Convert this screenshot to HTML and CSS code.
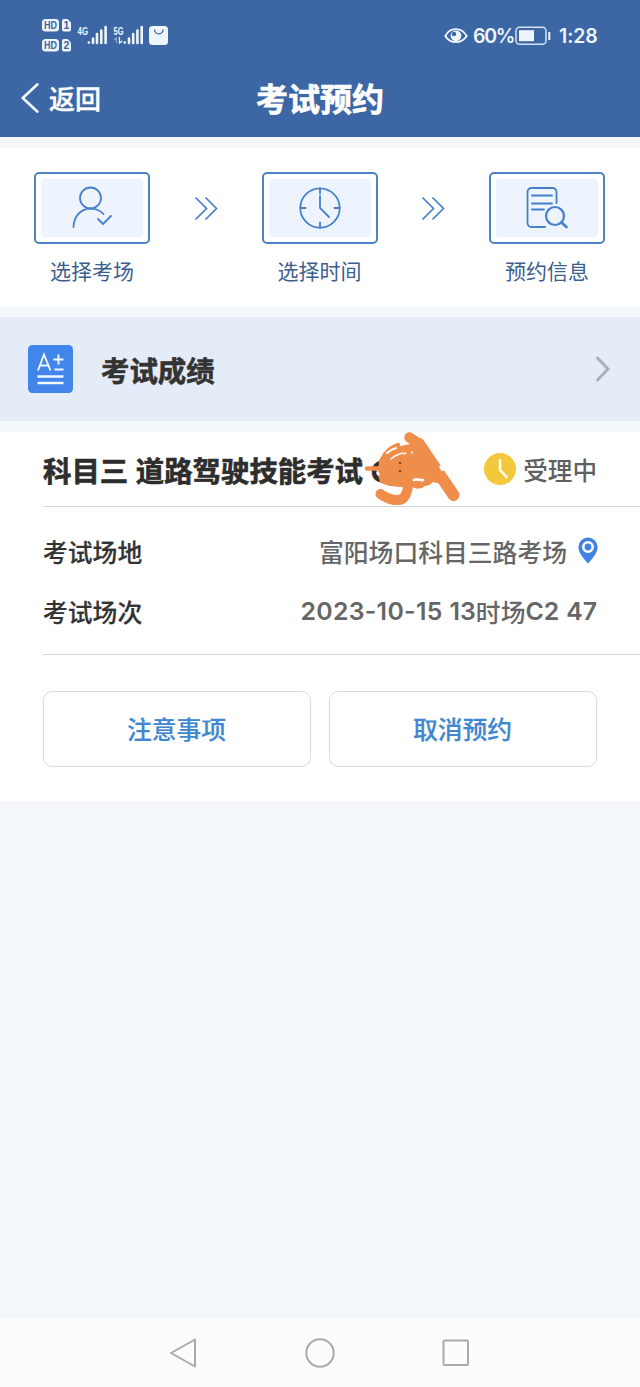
FILE: index.html
```html
<!DOCTYPE html>
<html lang="zh-CN">
<head>
<meta charset="utf-8">
<title>考试预约</title>
<link rel="stylesheet" href="styles.css">
</head>
<body>
<div class="screen">
  <header class="header">
    <div class="status">
      <svg class="status-left" width="130" height="40" viewBox="40 15 130 40" fill="#eef5fd">
        <rect x="42" y="19" width="17" height="12.500" rx="3.500"/>
        <path d="M62 21a2 2 0 0 1 2-2h3.500l3.500 3.500v7a2 2 0 0 1-2 2h-5a2 2 0 0 1-2-2z"/>
        <rect x="42" y="39" width="17" height="12.500" rx="3.500"/>
        <path d="M62 41a2 2 0 0 1 2-2h3.500l3.500 3.500v7a2 2 0 0 1-2 2h-5a2 2 0 0 1-2-2z"/>
        <g class="hd" text-anchor="middle">
          <text x="50.500" y="29" textLength="13" lengthAdjust="spacingAndGlyphs">HD</text>
          <text x="66.300" y="29.200">1</text>
          <text x="50.500" y="49" textLength="13" lengthAdjust="spacingAndGlyphs">HD</text>
          <text x="66.300" y="49.200">2</text>
        </g>
        <text class="net" x="77.500" y="34.500" textLength="10.500" lengthAdjust="spacingAndGlyphs">4G</text>
        <text class="net" x="113.500" y="34.500" textLength="10" lengthAdjust="spacingAndGlyphs">5G</text>
        <path d="M88.800 42.500v.1M93 38.500v4.500M97 34v9M101.300 30.500v12.500M105.600 27v16M124.800 42.500v.1M129 38.500v4.500M133.200 34v9M137.400 30.500v12.500M141.700 27v16" stroke="#eef5fd" stroke-width="2.600" stroke-linecap="round"/>
        <path d="M119.500 37v6l3-2" fill="none" stroke="#eef5fd" stroke-width="1.300"/>
        <path d="M114 40l2.500-2v5" fill="none" stroke="#8fabd2" stroke-width="1.200"/>
        <rect x="149" y="26" width="19" height="19" rx="3.500"/>
        <path d="M154.500 29.500a4.300 4.300 0 0 0 8.600 0" fill="none" stroke="#3c66a4" stroke-width="1.300"/>
      </svg>
      <div class="status-right">
        <svg width="24" height="18" viewBox="0 0 24 18"><path d="M1.300 9C6-.2 17.500-.2 22.700 9 17.500 17.200 6 17.200 1.300 9z" fill="none" stroke="#eef5fd" stroke-width="1.900"/><circle cx="12" cy="8.800" r="5.400" fill="#eef5fd"/><circle cx="10" cy="7" r="2.200" fill="#3c66a4"/></svg>
        <span class="percent">60%</span>
        <svg class="battery" width="36" height="20" viewBox="0 0 36 20"><rect x="1" y="1.200" width="30" height="17" rx="3.500" fill="none" stroke="#d4e2f4" stroke-width="1.500"/><rect x="4" y="4.200" width="15" height="11" fill="#eef5fd"/><path d="M34.300 6v8" stroke="#eef5fd" stroke-width="2"/></svg>
        <span class="time">1:28</span>
      </div>
    </div>
    <div class="titlebar">
      <div class="back">
        <svg width="18" height="30" viewBox="0 0 18 30"><path d="M16.300 1.500L1.700 15l14.600 13.500" fill="none" stroke="#eff7ff" stroke-width="2.700" stroke-linecap="round" stroke-linejoin="round"/></svg>
        <span>返回</span>
      </div>
      <h1>考试预约</h1>
    </div>
  </header>

  <section class="steps">
    <div class="step">
      <div class="tile"><div class="tile-inner">
        <svg width="44" height="44" viewBox="1 0 44 44"><circle cx="21.500" cy="12" r="10.500"/><path d="M4.500 41C5 30 12 22.700 21.500 22.700c5.500 0 10 2 13 5.300M29 33l5 5 8-8"/></svg>
      </div></div>
      <span>选择考场</span>
    </div>
    <svg class="arrows" width="24" height="24" viewBox="0 0 24 24"><path d="M2 2l10.500 10.500L2 23M12 2l10.500 10.500L12 23"/></svg>
    <div class="step">
      <div class="tile"><div class="tile-inner">
        <svg width="44" height="44" viewBox="0 0 44 44"><circle cx="22" cy="22" r="19.700"/><path d="M22 2.500v5M22 36.500v5M2.500 22h5M36.500 22h5M22 10v12l9 9"/></svg>
      </div></div>
      <span>选择时间</span>
    </div>
    <svg class="arrows" width="24" height="24" viewBox="0 0 24 24"><path d="M2 2l10.500 10.500L2 23M12 2l10.500 10.500L12 23"/></svg>
    <div class="step">
      <div class="tile"><div class="tile-inner">
        <svg width="44" height="44" viewBox="0 0 44 44"><path d="M31.500 17V6a4 4 0 0 0-4-4H6.500a4 4 0 0 0-4 4v31a4 4 0 0 0 4 4H20M7 9.500h20M7 17.500h20M7 23.500h12"/><circle cx="30" cy="30" r="9" stroke-width="2.200"/><path d="M36.500 36.500l5 4.500" stroke-width="2.700"/></svg>
      </div></div>
      <span>预约信息</span>
    </div>
  </section>

  <section class="score">
    <svg width="45" height="48" viewBox="0 0 45 48"><rect width="45" height="48" rx="4.500" fill="#4285eb"/><path d="M10 25.500L16 9.500l6.500 16M12 20.500h8.500M25.500 14.500h10M30.500 9.500v10M26.500 24.500h9" fill="none" stroke="#f2f8ff" stroke-width="1.900"/><path d="M9.500 31.500h26M9.500 38h26" stroke="#f2f8ff" stroke-width="2.400"/></svg>
    <h2>考试成绩</h2>
    <svg class="chevron" width="16" height="28" viewBox="0 0 16 28"><path d="M2.500 3L13 14 2.500 25" fill="none" stroke="#aab0b5" stroke-width="3" stroke-linecap="round"/></svg>
  </section>

  <section class="card">
    <div class="card-head">
      <h2>科目三 道路驾驶技能考试 C</h2>
      <svg class="scribble" width="105" height="80" viewBox="360 430 105 80" fill="none" stroke="#ef8e4a" stroke-linecap="round" stroke-linejoin="round">
        <path fill="#ef8e4a" stroke-width="2" d="M380 460l3-4 9-7 18-4 13-3 7 20 16 22-13-3-6 2-3 2-24 1-10-1-9-3-2-7z"/>
        <path d="M367 468.500h13" stroke-width="4.500"/>
        <path d="M383 459c2-7 7-11 15-14" stroke-width="4.500"/>
        <path d="M409.500 437.500l9 6 6 20" stroke-width="10.500"/>
        <path d="M419 444l34.500 51" stroke-width="12"/>
        <path d="M380.500 494c8 6 18 8 23 4 4-4 5-12 5-20" stroke-width="10"/>
        <path d="M411 484c4 3 9 4 13 0 3 0 6-1 7-4" stroke-width="4"/>
        <path d="M387 453c3-3 6-4 9-5" stroke="#fff" stroke-width="2"/>
        <path d="M391 459c4-4 8-5 12-6M404.500 454l1-1M412 452v1" stroke="#fff" stroke-width="1.600"/>
        <path d="M414 480c3-2 6 1 9 0M440.500 467l2 3" stroke="#fff" stroke-width="2.600"/>
        <path d="M399.500 463h1M399.500 471h1" stroke="#4b2d20" stroke-width="1.600"/>
        <path d="M377.500 473l1 1" stroke="#fff" stroke-width="2.500"/>
      </svg>
      <div class="state">
        <svg width="32" height="32" viewBox="0 0 32 32"><circle cx="16" cy="16" r="16" fill="#f4c83d"/><path d="M16 7v10l6.500 7" fill="none" stroke="#fffbe8" stroke-width="2.600" stroke-linecap="round"/></svg>
        <span>受理中</span>
      </div>
    </div>
    <dl class="details">
      <div class="row">
        <dt>考试场地</dt>
        <dd>富阳场口科目三路考场<svg width="20" height="27" viewBox="0 0 20 27"><path fill="#4183e4" d="M10 .500A9.600 9.600 0 0 0 .400 10C.400 15.500 5 21 10 26.500 15 21 19.600 15.500 19.600 10A9.600 9.600 0 0 0 10 .500z"/><circle cx="10" cy="10" r="4.700" fill="#4183e4" stroke="#fff" stroke-width="2.500"/></svg></dd>
      </div>
      <div class="row">
        <dt>考试场次</dt>
        <dd class="session"><span class="date">2023-10-15</span><span>13</span>时场<span>C2</span><span class="seat">47</span></dd>
      </div>
    </dl>
    <div class="actions">
      <button>注意事项</button>
      <button>取消预约</button>
    </div>
  </section>

  <nav class="navbar">
    <svg width="30" height="32" viewBox="0 0 30 32"><path d="M26 2.500v27L2 16z"/></svg>
    <svg width="30" height="32" viewBox="0 0 30 32"><circle cx="15" cy="16" r="13.700"/></svg>
    <svg width="30" height="32" viewBox="0 0 30 32"><rect x="2.500" y="3.500" width="24.500" height="24.500" rx="1"/></svg>
  </nav>
</div>
</body>
</html>
```

FILE: styles.css
```css
* { box-sizing: border-box; }

body {
  margin: 0;
  font-family: "Noto Sans CJK SC", sans-serif;
  background: #f4f8fa;
}

h1, h2, dl, dt, dd { margin: 0; }
svg { display: block; flex: none; }

.screen {
  width: 640px;
  height: 1387px;
  display: flex;
  flex-direction: column;
  gap: 11px;
  background: #f4f8fa;
}

.header {
  height: 137px;
  background: #3c66a4;
  color: #fff;
}

.status {
  height: 61px;
  padding: 15px 42px 0 40px;
  display: flex;
  justify-content: space-between;
  align-items: flex-start;
}

.hd {
  font: bold 10.5px "Liberation Sans", sans-serif;
  fill: #3c66a4;
}

.net { font: bold 11.5px "Liberation Sans", sans-serif; }

.status-right {
  display: flex;
  align-items: center;
  height: 41px;
  color: #eef5fd;
  font: 600 19.5px/41px Inter, sans-serif;
}

.percent { margin-left: 5px; padding-top: 2px; width: 38px; letter-spacing: -1.3px; }
.battery { margin-left: 4px; }
.time { margin-left: 8px; padding-top: 2px; width: 39px; letter-spacing: -0.1px; }

.titlebar {
  height: 72px;
  display: grid;
  grid-template-columns: 1fr auto 1fr;
  align-items: center;
  padding: 0 21px;
}

.back {
  display: flex;
  align-items: center;
  gap: 10px;
  padding-top: 2px;
  font-size: 26px;
  font-weight: 500;
  line-height: 38px;
  -webkit-text-stroke: 0.4px currentColor;
}

.back span { margin-top: -1px; }

.titlebar h1 {
  font-size: 32px;
  line-height: 46px;
  font-weight: 700;
  -webkit-text-stroke: 0.7px currentColor;
}

.steps {
  height: 158px;
  padding: 24px 35px 0 34px;
  display: flex;
  justify-content: space-between;
  align-items: flex-start;
  background: #fff;
}

.step {
  width: 116px;
  display: flex;
  flex-direction: column;
  align-items: center;
  gap: 11px;
  color: #3d5f8f;
  font-size: 21px;
  line-height: 31px;
}

.tile {
  width: 116px;
  height: 72px;
  padding: 5px;
  border: 2px solid #4c84c6;
  border-radius: 5px;
}

.tile-inner {
  height: 100%;
  display: flex;
  align-items: center;
  justify-content: center;
  border-radius: 4px;
  background: #edf4fe;
}

.tile svg, .arrows {
  fill: none;
  stroke: #467fcb;
  stroke-width: 1.8;
  stroke-linecap: round;
}

.arrows { margin-top: 24px; stroke-width: 1.7; }

.score {
  height: 104px;
  padding: 0 29px 0 28px;
  display: flex;
  align-items: center;
  background: #e4ecf8;
  color: #333;
}

.score h2 {
  margin-left: 28px;
  padding-top: 2px;
  font-size: 28.4px;
  line-height: 40px;
  -webkit-text-stroke: 0.6px currentColor;
}

.chevron { margin-left: auto; }

.card {
  height: 369px;
  padding-left: 43px;
  background: #fff;
}

.card-head {
  position: relative;
  height: 75px;
  padding-right: 43px;
  display: flex;
  align-items: center;
  justify-content: space-between;
  border-bottom: 1px solid #d4d6d8;
  color: #2d2d2d;
}

.card-head h2 {
  padding-top: 1px;
  font-size: 28.4px;
  line-height: 40px;
  word-spacing: 1.2px;
  white-space: nowrap;
  -webkit-text-stroke: 0.6px currentColor;
}

.scribble { position: absolute; left: 317px; top: -2px; }

.state {
  display: flex;
  align-items: center;
  gap: 7px;
  color: #606060;
  font-size: 24.6px;
  font-weight: 500;
  line-height: 36px;
}

.details {
  height: 148px;
  padding: 14px 43px 0 0;
  border-bottom: 1px solid #d4d6d8;
  font-size: 24.8px;
  font-weight: 500;
}

.row {
  height: 60px;
  display: flex;
  align-items: center;
  justify-content: space-between;
}

dt { color: #333; -webkit-text-stroke: 0.2px currentColor; }
dd { display: flex; align-items: center; color: #666; }
dd svg { margin: 0 -1px 2px 11px; }

.session { font-family: Inter, "Noto Sans CJK SC", sans-serif; }
.session span { font-weight: 600; }
.date { margin-right: 7px; letter-spacing: 0.3px; }
.seat { margin-left: 7px; }

.actions {
  padding: 36px 43px 0 0;
  display: grid;
  grid-template-columns: 1fr 1fr;
  gap: 18px;
}

.actions button {
  height: 76px;
  padding: 0 1px 2px 0;
  border: 1.5px solid #d9dbdd;
  border-radius: 9px;
  background: #fff;
  color: #4087d1;
  font: 500 24.8px "Noto Sans CJK SC", sans-serif;
  -webkit-text-stroke: 0.2px currentColor;
}

.navbar {
  height: 69px;
  margin-top: auto;
  padding: 0 169px;
  display: flex;
  align-items: center;
  justify-content: space-between;
  background: #fcfcfc;
}

.navbar svg {
  fill: none;
  stroke: #aaa;
  stroke-width: 2;
  stroke-linejoin: round;
}
```
